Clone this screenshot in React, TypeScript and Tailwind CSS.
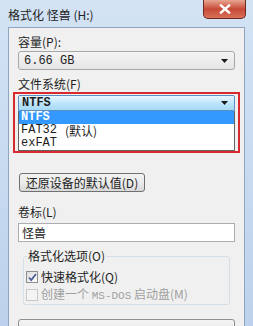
import React from "react";

const cjk = "font-['Microsoft_YaHei','Noto_Sans_CJK_SC',sans-serif]";
const mono = "font-['Liberation_Mono','Noto_Sans_CJK_SC',monospace]";

function Arrow() {
  return (
    <svg width="7" height="4" viewBox="0 0 7 4" className="shrink-0">
      <path d="M0 0h7L3.5 4z" fill="#1a1a1a" />
    </svg>
  );
}

function CheckBox({ checked, disabled }: { checked?: boolean; disabled?: boolean }) {
  return (
    <div
      className={`w-[12px] h-[12px] border flex items-center justify-center ${
        disabled ? "border-[#c8c8c8] bg-[#f4f4f4]" : "border-[#8e8f8f] bg-gradient-to-br from-[#dcdcdc] to-white"
      }`}
    >
      {checked && (
        <svg width="9" height="9" viewBox="0 0 9 9">
          <path d="M1 4.5l2.2 2.5L8 1" stroke="#4a5f97" strokeWidth="1.8" fill="none" />
        </svg>
      )}
    </div>
  );
}

export default function App() {
  return (
    <div className={`w-[253px] h-[326px] overflow-hidden flex flex-col bg-gradient-to-b from-[#d3e3f4] to-[#bcd2ec] ${cjk}`}>
      {/* title bar */}
      <div className="h-[27px] shrink-0 flex items-start justify-between pl-[8px] pr-[7px]">
        <span className="text-[12px] leading-[16px] mt-[7px] text-[#1e1e1e]">格式化 怪兽 (H:)</span>
        <div className="w-[43px] h-[19px] rounded-b-[5px] border border-t-0 border-[#6b2a22] bg-gradient-to-b from-[#e7a493] via-[#c74a36] to-[#d9705a] flex items-center justify-center">
          <svg width="12" height="10" viewBox="0 0 12 10">
            <path d="M2 1.5l8 7M10 1.5l-8 7" stroke="#ffffff" strokeWidth="2.4" strokeLinecap="square" />
          </svg>
        </div>
      </div>

      {/* body */}
      <div className="flex-1 flex px-[8px]">
        <div className="flex-1 bg-[#f0f0f0] border border-[#8fa6c1] border-b-0 px-[9px] pt-[6px] flex flex-col text-[12px] leading-[16px] text-[#1e1e1e]">
          <div>容量(P):</div>
          <div className="mt-[1px] h-[19px] rounded-[3px] border border-[#a7a7a7] bg-gradient-to-b from-[#f4f4f4] to-[#e6e6e6] flex items-center justify-between pl-[5px] pr-[6px]">
            <span className={`${mono} text-[12px]`}>6.66 GB</span>
            <Arrow />
          </div>

          <div className="mt-[6px]">文件系统(F)</div>
          <div className="-mx-[5px] border-[2px] border-[#d82a2e] px-[3px] pt-[1px]">
            <div className="h-[16px] rounded-t-[2px] border border-[#5a8fc0] bg-gradient-to-b from-[#eaf6fd] via-[#bee6fd] to-[#a7d9f5] flex items-center justify-between pl-[3px] pr-[6px]">
              <span className={`${mono} text-[12px] font-bold`}>NTFS</span>
              <Arrow />
            </div>
            <div className={`border border-t-0 border-[#646464] bg-white ${mono} text-[12px] leading-[13px]`}>
              <div className="bg-[#3399ff] text-white font-bold pl-[2px] h-[13px]">NTFS</div>
              <div className="pl-[2px] h-[13px] flex items-center">
                FAT32 <span className={`${cjk} ml-[8px]`}>(默认)</span>
              </div>
              <div className="pl-[2px] h-[13px]">exFAT</div>
            </div>
          </div>

          <div className="mt-[20px] ml-[1px] w-[126px] h-[19px] rounded-[3px] border border-[#707070] bg-gradient-to-b from-[#f2f2f2] via-[#ebebeb] to-[#d8d8d8] flex items-center justify-center">
            还原设备的默认值(D)
          </div>

          <div className="mt-[12px]">卷标(L)</div>
          <div className="mt-[3px] h-[19px] border border-[#abadb3] bg-white flex items-center pl-[3px]">怪兽</div>

          <div className="mt-[14px] mx-[5px] relative border border-[#d5dfe5] rounded-[3px] h-[49px] pt-[12px] pl-[2px] flex flex-col gap-[1px]">
            <div className="absolute -top-[9px] left-[3px] bg-[#f0f0f0] px-[1px]">格式化选项(O)</div>
            <div className="flex items-center gap-[3px]">
              <CheckBox checked />
              <span>快速格式化(Q)</span>
            </div>
            <div className="flex items-center gap-[3px] text-[#a0a0a0]">
              <CheckBox disabled />
              <span>
                创建一个 <span className={`${mono} text-[11px]`}>MS-DOS</span> 启动盘(M)
              </span>
            </div>
          </div>

          <div className="mt-[14px] h-[20px] rounded-t-[3px] border border-[#8f8f8f] bg-gradient-to-b from-[#f4f4f4] to-[#e2e2e2]" />
        </div>
      </div>
    </div>
  );
}
